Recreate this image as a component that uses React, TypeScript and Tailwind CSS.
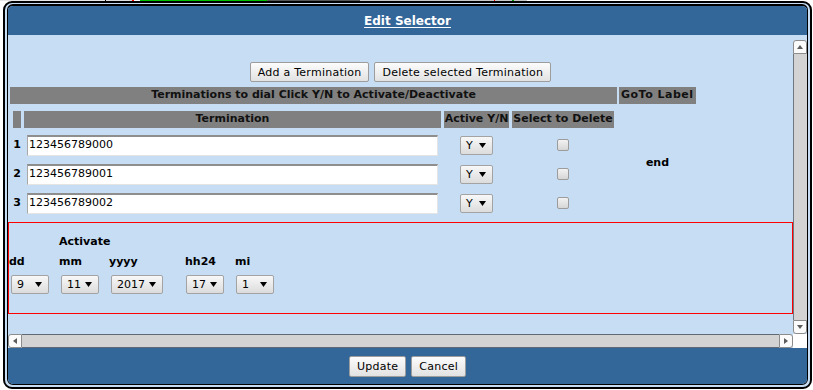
import React from "react";

function Tri({ dir = "down" }: { dir?: "down" | "up" | "left" | "right" }) {
  const side = dir === "left" || dir === "right";
  const w = side ? 4 : 6;
  const h = side ? 6 : 4;
  const pts = {
    down: "0,0 6,0 3,4",
    up: "0,4 6,4 3,0",
    left: "4,0 4,6 0,3",
    right: "0,0 0,6 4,3",
  }[dir];
  return (
    <svg width={w} height={h} viewBox={`0 0 ${w} ${h}`}>
      <polygon points={pts} fill="currentColor" />
    </svg>
  );
}

function SelArrow() {
  return (
    <svg width="7" height="5" viewBox="0 0 7 5">
      <polygon points="0,0 7,0 3.5,5" fill="#000" />
    </svg>
  );
}

function Btn({ children, h = "h-[20px]" }: { children: React.ReactNode; h?: string }) {
  return (
    <button
      className={`${h} px-[7px] border border-[#9d9d9d] rounded-[2px] bg-linear-to-b from-[#fcfcfc] to-[#e2e2e2] text-[11px] tracking-[0.25px] leading-none text-black`}
    >
      {children}
    </button>
  );
}

function Select({ value, w }: { value: string; w: string }) {
  return (
    <div
      className={`${w} h-[19px] flex items-center justify-between pl-[5px] pr-[6px] border border-[#a3a3a3] rounded-[2px] bg-linear-to-b from-[#f8f8f8] to-[#dcdcdc] text-[11px] leading-none text-black`}
    >
      <span>{value}</span>
      <SelArrow />
    </div>
  );
}

function TopStrip() {
  return (
    <div className="h-[1px] flex">
      <div className="w-[105px] bg-[#e6e6e6]" />
      <div className="w-[1px] bg-black" />
      <div className="w-[26px] bg-[#dddddd]" />
      <div className="w-[2px] bg-[#ff0000]" />
      <div className="w-[6px] bg-white" />
      <div className="w-[127px] bg-[#00c000]" />
      <div className="w-[93px] bg-[#555555]" />
      <div className="w-[134px] bg-[#c8c8c8]" />
      <div className="w-[1px] bg-[#ff0000]" />
      <div className="w-[17px] bg-[#c8c8c8]" />
      <div className="w-[2px] bg-[#00a000]" />
      <div className="w-[13px] bg-[#c8c8c8]" />
    </div>
  );
}

const rows = ["123456789000", "123456789001", "123456789002"];

function ScrollBtn({ dir, round }: { dir: "up" | "down" | "left" | "right"; round: string }) {
  return (
    <div
      className={`w-[14px] h-[14px] shrink-0 bg-[#fbfbfb] border border-[#8c8c8c] ${round} flex items-center justify-center text-[#5c5c5c]`}
    >
      <Tri dir={dir} />
    </div>
  );
}

export default function App() {
  return (
    <div className="w-[813px] h-[390px] bg-white font-['DejaVu_Sans',sans-serif] text-black overflow-hidden">
      <TopStrip />
      <div className="ml-[3px] w-[809px] h-[388px] border-2 border-black rounded-[9px] bg-[#c6ddf4] pt-[1px] px-[2px] pb-[2px]">
        <div className="h-full flex flex-col border border-t-2 border-black rounded-[6px] overflow-hidden">
          {/* title */}
          <div className="h-[29px] shrink-0 bg-[#336699] flex items-center justify-center">
            <span className="text-white font-bold text-[12px] underline underline-offset-[2px]">
              Edit Selector
            </span>
          </div>

          {/* body */}
          <div className="flex-1 bg-[#c6ddf4] pt-[5px] flex flex-col">
            <div className="flex h-[294px]">
              <div className="flex-1 overflow-hidden pt-[22px]">
                <div className="flex justify-center gap-[5px]">
                  <Btn>Add a Termination</Btn>
                  <Btn>Delete selected Termination</Btn>
                </div>

                <div className="mt-[5px] pl-[2px] flex gap-[2px]">
                  <div className="w-[607px] pb-[6px]">
                    <div className="h-[17px] bg-[#808080] flex items-center justify-center font-bold text-[11px] text-[#111]">
                      Terminations to dial Click Y/N to Activate/Deactivate
                    </div>
                    <div className="mt-[7px] pl-[3px] grid grid-cols-[8px_417px_65px_102px] grid-rows-[18px_26px_26px_26px] gap-x-[3px] gap-y-[3px] text-[11px]">
                      <div className="h-[17px] bg-[#808080]" />
                      <div className="h-[17px] bg-[#808080] flex items-center justify-center font-bold text-[#111]">
                        Termination
                      </div>
                      <div className="h-[17px] bg-[#808080] flex items-center justify-center font-bold text-[#111] whitespace-nowrap">
                        Active Y/N
                      </div>
                      <div className="h-[17px] bg-[#808080] flex items-center justify-center font-bold text-[#111] whitespace-nowrap">
                        Select to Delete
                      </div>
                      {rows.map((r, i) => (
                        <React.Fragment key={r}>
                          <div className="flex items-center justify-center font-bold">{i + 1}</div>
                          <div className="flex items-center pl-[3px]">
                            <div className="w-[411px] h-[21px] bg-white border-t-2 border-l border-t-[#8e8e8e] border-l-[#a8a8a8] border-b border-r border-b-[#e4e4e4] border-r-[#e4e4e4] pl-[1px] flex items-center">
                              {r}
                            </div>
                          </div>
                          <div className="flex items-center justify-center">
                            <Select value="Y" w="w-[33px]" />
                          </div>
                          <div className="flex items-center justify-center">
                            <div className="w-[12px] h-[12px] border border-[#9c9c9c] rounded-[2px] bg-linear-to-b from-[#f2f2f2] to-[#d6d6d6]" />
                          </div>
                        </React.Fragment>
                      ))}
                    </div>
                  </div>
                  <div className="w-[77px] flex flex-col">
                    <div className="h-[17px] bg-[#808080] pl-[2px] flex items-center font-bold text-[11px] tracking-[0.5px] text-[#111] whitespace-nowrap">
                      GoTo Label
                    </div>
                    <div className="flex-1 flex items-center justify-center pt-[1px] font-bold text-[11px]">end</div>
                  </div>
                </div>

                <div className="border border-[#ff0000] h-[92px] pt-[12px]">
                  <div className="grid grid-cols-[50px_50px_76px_50px_50px] grid-rows-[13px_13px_19px] gap-y-[7px] text-[11px] leading-[13px]">
                    <div className="col-start-2 font-bold">Activate</div>
                    <div className="col-start-1 row-start-2 font-bold">dd</div>
                    <div className="row-start-2 font-bold">mm</div>
                    <div className="row-start-2 font-bold">yyyy</div>
                    <div className="row-start-2 font-bold">hh24</div>
                    <div className="row-start-2 font-bold">mi</div>
                    <div className="row-start-3 pl-[2px]">
                      <Select value="9" w="w-[38px]" />
                    </div>
                    <div className="row-start-3 pl-[2px]">
                      <Select value="11" w="w-[38px]" />
                    </div>
                    <div className="row-start-3 pl-[2px]">
                      <Select value="2017" w="w-[52px]" />
                    </div>
                    <div className="row-start-3 pl-[1px]">
                      <Select value="17" w="w-[38px]" />
                    </div>
                    <div className="row-start-3 pl-[1px]">
                      <Select value="1" w="w-[38px]" />
                    </div>
                  </div>
                </div>
              </div>

              {/* vertical scrollbar */}
              <div className="w-[14px] flex flex-col">
                <ScrollBtn dir="up" round="rounded-t-[3px]" />
                <div className="flex-1 bg-[#d3d3d3] border-l border-[#6f7780]" />
                <ScrollBtn dir="down" round="rounded-b-[3px]" />
              </div>
            </div>

            {/* horizontal scrollbar */}
            <div className="h-[14px] flex">
              <ScrollBtn dir="left" round="rounded-l-[3px]" />
              <div className="flex-1 bg-[#d3d3d3] border-y border-[#5f6a74]" />
              <ScrollBtn dir="right" round="rounded-r-[3px]" />
              <div className="w-[14px] bg-white" />
            </div>
          </div>

          {/* footer */}
          <div className="h-[36px] shrink-0 bg-[#336699] flex justify-center pt-[8px] gap-[5px]">
            <Btn h="h-[21px]">Update</Btn>
            <Btn h="h-[21px]">Cancel</Btn>
          </div>
        </div>
      </div>
    </div>
  );
}
